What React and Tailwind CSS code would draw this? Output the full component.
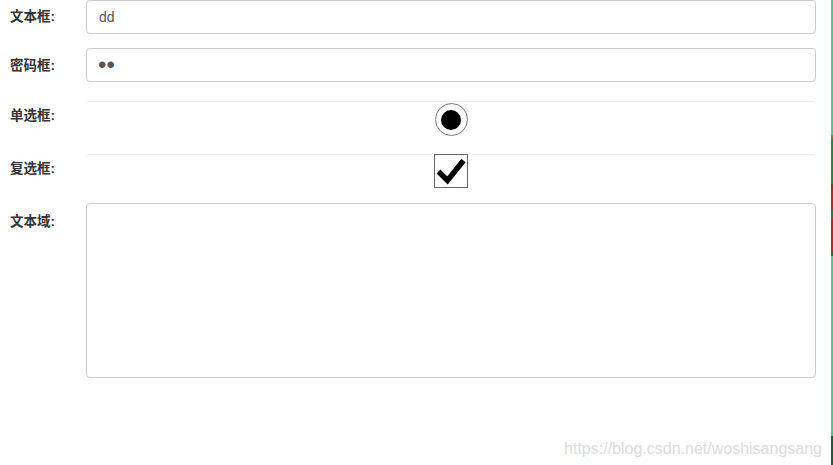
import React from "react";

function Label({ children, pt }) {
  return (
    <div
      className={
        "w-[86px] shrink-0 pl-[10px] text-[13.5px] leading-[18px] font-bold text-[#333] " +
        pt
      }
      style={{ fontFamily: '"Liberation Sans", "Noto Sans CJK SC", sans-serif' }}
    >
      {children}
    </div>
  );
}

function RightEdge() {
  return (
    <div className="flex flex-col w-[2px] shrink-0 h-[465px]">
      <div className="h-[135px] bg-[#52c48e]" />
      <div className="h-[4px] bg-[#8a7a3a]" />
      <div className="h-[45px] bg-[#1f8a45]" />
      <div className="h-[6px] bg-[#7a3a2a]" />
      <div className="h-[20px] bg-[#a8302a]" />
      <div className="h-[8px] bg-[#2a7a3a]" />
      <div className="h-[34px] bg-[#b02a28]" />
      <div className="h-[4px] bg-[#1f6a35]" />
      <div className="h-[180px] bg-[#52c48e]" />
      <div className="h-[29px] bg-[#1d5a30]" />
    </div>
  );
}

export default function App() {
  return (
    <div
      className="flex w-[833px] h-[465px] bg-white overflow-hidden"
      style={{ fontFamily: '"Liberation Sans", "Noto Sans CJK SC", sans-serif' }}
    >
      <div className="flex flex-col w-[831px] shrink-0">
        {/* 文本框 */}
        <div className="flex">
          <Label pt="pt-[8px]">文本框:</Label>
          <input
            type="text"
            defaultValue="dd"
            readOnly
            className="w-[730px] h-[34px] px-[12px] border border-[#ccc] rounded-[4px] text-[14px] text-[#555] outline-none"
          />
        </div>

        {/* 密码框 */}
        <div className="flex mt-[14px]">
          <Label pt="pt-[9px]">密码框:</Label>
          <input
            type="password"
            defaultValue="dd"
            readOnly
            className="w-[730px] h-[34px] px-[11px] py-0 border border-[#ccc] rounded-[4px] text-[24px] leading-[32px] text-[#555] outline-none"
          />
        </div>

        {/* 单选框 */}
        <div className="flex mt-[19px]">
          <Label pt="pt-[6px]">单选框:</Label>
          <div className="w-[730px] h-[53px] border-t border-[#eee] rounded-tl-[4px] rounded-tr-[4px] flex justify-center">
            <div className="w-[33px] h-[33px] mt-[1px] rounded-full border border-[#777] flex items-center justify-center">
              <div className="w-[20px] h-[20px] rounded-full bg-black" />
            </div>
          </div>
        </div>

        {/* 复选框 */}
        <div className="flex">
          <Label pt="pt-[6px]">复选框:</Label>
          <div className="w-[730px] h-[49px] border-t border-[#eee] rounded-tl-[4px] rounded-tr-[4px] flex justify-center">
            <div className="w-[34px] h-[34px] -mt-[1px] border border-[#666] bg-white flex items-center justify-center">
              <svg width="32" height="32" viewBox="0 0 32 32">
                <path
                  d="M3.5 16.5 L12.5 25.5 L28.5 5.5"
                  fill="none"
                  stroke="#000"
                  strokeWidth="5.5"
                  strokeLinecap="butt"
                  strokeLinejoin="miter"
                />
              </svg>
            </div>
          </div>
        </div>

        {/* 文本域 */}
        <div className="flex">
          <Label pt="pt-[10px]">文本域:</Label>
          <textarea
            readOnly
            className="w-[730px] h-[175px] px-[12px] py-[6px] border border-[#ccc] rounded-[4px] resize-none outline-none"
          />
        </div>

        <div className="flex justify-end pr-[9px] mt-[62px]">
          <span className="text-[16px] leading-[18px] text-[#dcdcdc]">
            https://blog.csdn.net/woshisangsang
          </span>
        </div>
      </div>
      <RightEdge />
    </div>
  );
}
